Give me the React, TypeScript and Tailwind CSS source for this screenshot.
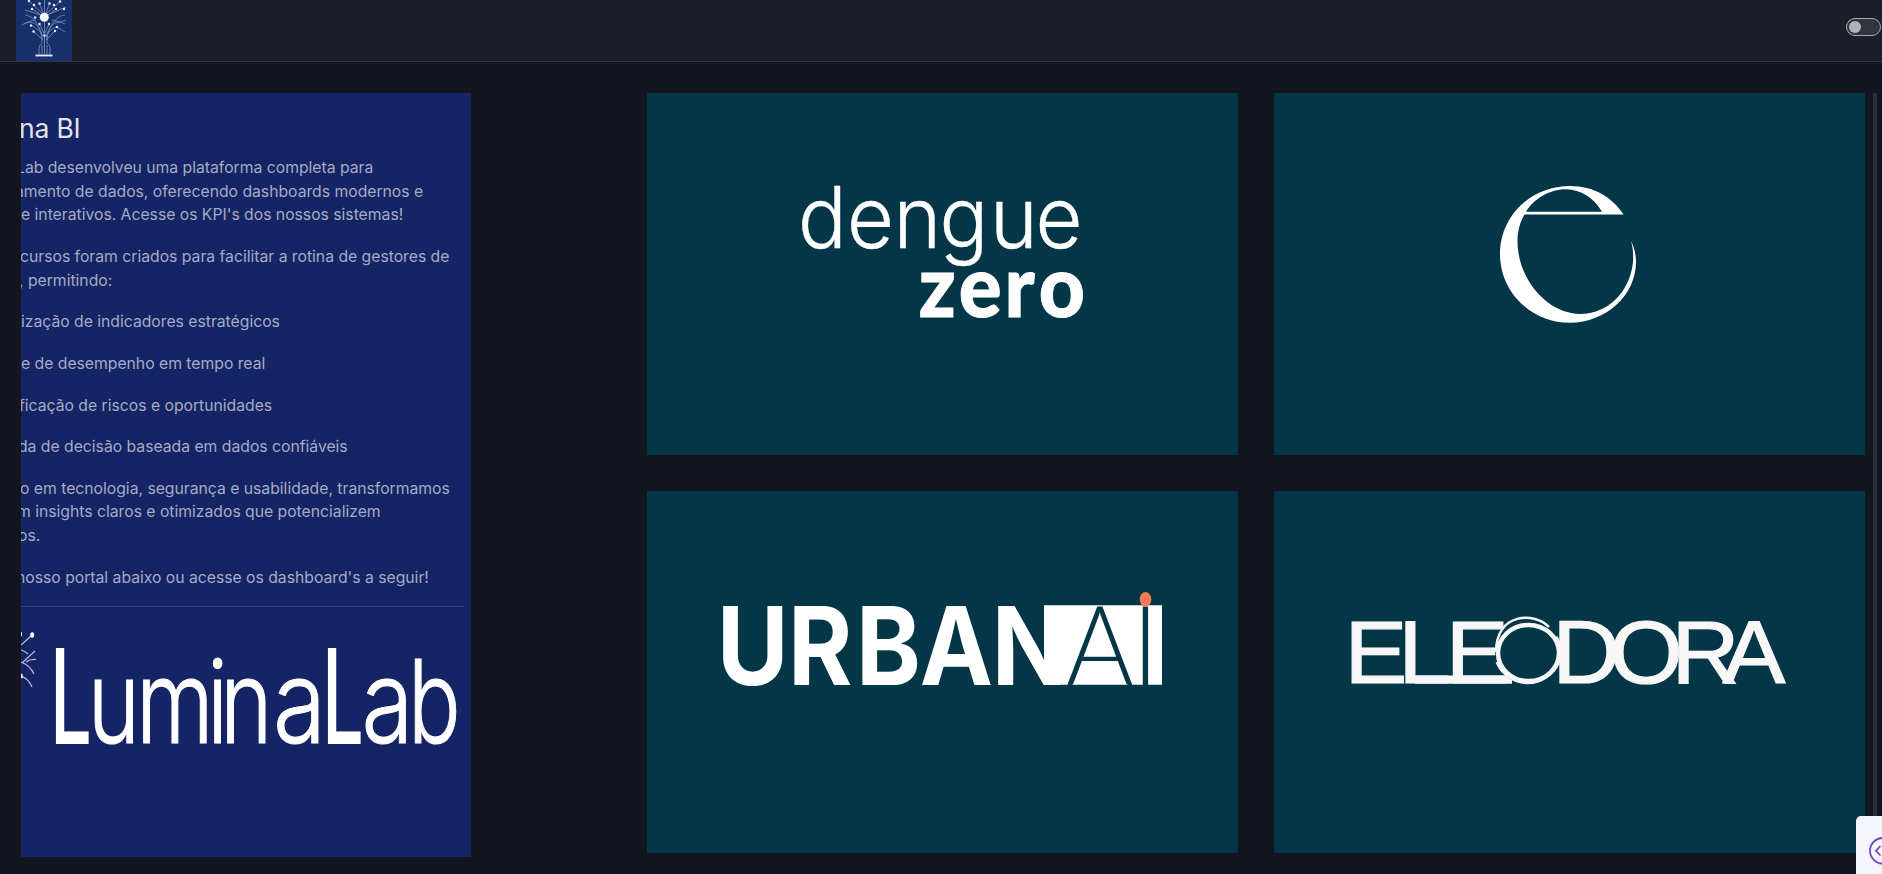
import type { ReactNode } from 'react';

const SEEDS: [number, number][] = [
  [29, 1], [34, 5], [32, 9], [39.5, 3.5], [60, 1.5], [56, 9], [64, 9], [54, 5], [49.5, 3.5],
  [35, 17.5], [31, 25.5], [39.5, 24], [33.5, 31.5], [49, 24], [57, 27], [55, 31], [44.5, 35.5],
];

function TreeLogo() {
  return (
    <svg className="h-[61px] w-14 bg-[#183069]" viewBox="16 0 56 61" aria-hidden="true">
      <g fill="none" stroke="#8fa3cf" strokeWidth="0.9" opacity="0.75">
        <path d="M44.5 0V46M44.5 17L32 9M44.5 17L56 9M43 14L29 1M46 14L60 1.5M44.5 17L39.5 3.5M44.5 17L49.5 3.5M44 16L25 10M45 16L66 7M44.5 34L49 24M44.5 34L39.5 24" />
        <path d="M42 40C41 26 34 19 24 24M47 40C48 26 55 19 65 24M42 34C38 24 32 15 25 15M47 34C51 24 58 15 65 15M43 37C40 30 36 28 31 25.5M46 37C49 30 53 28 57 27M43 40L33.5 31.5M46 40L55 31M52 20C58 22 62 22 66 20M36 20C31 21 26 22 22 25M57 27L65 32" />
        <path d="M42 34V43Q39 45 39 48V55M47 34V43Q50 45 50 48V55M44.5 36V55M42 45V55M47 45V55" />
      </g>
      <g fill="#dfe5f3">
        {SEEDS.map(([x, y]) => <circle key={`${x}-${y}`} cx={x} cy={y} r="1.25" />)}
      </g>
      <circle cx="44.3" cy="17.3" r="4.5" fill="#f4f6fa" />
      <path d="M35.5 55.5H52.5" stroke="#e6eaf3" strokeWidth="1.8" />
    </svg>
  );
}

function Line({ shift, children }: { shift: string; children: ReactNode }) {
  return <span className={`block whitespace-nowrap ${shift}`}>{children}</span>;
}

function AboutPanel() {
  return (
    <section className="h-[764px] w-[450px] shrink-0 overflow-hidden bg-[#152464] pt-[17px]">
      <h2 className="-ml-[2px] h-[37px] whitespace-nowrap text-[26.500px] leading-9 tracking-[-0.2px] text-[#e2e4ec]">na BI</h2>
      <div className="mt-[8.920px] space-y-[18px] text-[15.75px] leading-[23.650px] tracking-[-0.02px] text-[#a5abc4]">
        <p>
          <Line shift="-ml-[5px]">Lab desenvolveu uma plataforma completa para</Line>
          <Line shift="-ml-[6px]">amento de dados, oferecendo dashboards modernos e</Line>
          <Line shift="-ml-[5px]">te interativos. Acesse os KPI's dos nossos sistemas!</Line>
        </p>
        <p>
          <Line shift="-ml-[1px]">cursos foram criados para facilitar a rotina de gestores de</Line>
          <Line shift="-ml-[2px]">, permitindo:</Line>
        </p>
        <p><Line shift="ml-0">ização de indicadores estratégicos</Line></p>
        <p><Line shift="ml-0">e de desempenho em tempo real</Line></p>
        <p><Line shift="-ml-[2px]">ficação de riscos e oportunidades</Line></p>
        <p><Line shift="-ml-[3px]">da de decisão baseada em dados confiáveis</Line></p>
        <p>
          <Line shift="-ml-[1px]">o em tecnologia, segurança e usabilidade, transformamos</Line>
          <Line shift="-ml-[4px]">m insights claros e otimizados que potencializem</Line>
          <Line shift="-ml-[3px]">os.</Line>
        </p>
        <p><Line shift="-ml-[5px]">nosso portal abaixo ou acesse os dashboard's a seguir!</Line></p>
      </div>
      <hr className="mt-[17px] mr-[7px] border-[#34427a]" />
      <svg className="block h-[250px] w-[450px]" viewBox="21 608 450 250">
        <g fill="none" stroke="#b4bcd6" strokeWidth="1.2">
          <path d="M21 646L31 637M21 651Q25 652 28 655M22 664L35 652M26 663Q30 660 36 660.500M21 663Q30 666 34 675M21 677Q29 680 32 688" />
        </g>
        <ellipse cx="32.200" cy="636" rx="2" ry="2.800" fill="#fff" />
        <ellipse cx="21" cy="635" rx="1" ry="2.500" fill="#fff" />
        <ellipse cx="21" cy="677" rx="1.800" ry="2.500" fill="#fff" />
        <g fontFamily="Inter" fill="#fff">
          <text transform="translate(50 744.500) scale(.56 1)" fontWeight="500" fontSize="132">L</text>
          <text transform="translate(0 744) scale(.77 1)" x="114 177 269 286" fontWeight="300" fontSize="115" stroke="#fff" strokeWidth="1.200">umin</text>
          <text transform="translate(273 744) scale(.84 1)" fontWeight="300" fontSize="115" stroke="#fff" strokeWidth="1">a</text>
          <text transform="translate(322 744.500) scale(.56 1)" fontWeight="500" fontSize="132">L</text>
          <text transform="translate(361.500 744) scale(.82 1)" fontWeight="300" fontSize="115" stroke="#fff" strokeWidth="1">a</text>
          <text transform="translate(408 744) scale(.76 1)" fontWeight="300" fontSize="115" stroke="#fff" strokeWidth="1.200">b</text>
        </g>
      </svg>
    </section>
  );
}

function Card({ origin, label, children }: { origin: string; label: string; children: ReactNode }) {
  return (
    <a href="#" aria-label={label} className="block bg-[#033747]">
      <svg className="block h-full w-full" viewBox={`${origin} 591 362`}>{children}</svg>
    </a>
  );
}

function DengueZero() {
  return (
    <Card origin="647 93" label="dengue zero">
      <text transform="translate(0 248) scale(1 1.050)" x="798 847 893.500 939.500 990 1035.500" fontFamily="Inter" fontWeight="300" fontSize="81" fill="#fff" stroke="#fff" strokeWidth=".4">dengue</text>
      <text transform="scale(.93 1)" x="988 1031 1080 1117" y="316.700" fontFamily="Lato" fontWeight="900" fontSize="86" fill="#fff" stroke="#fff" strokeWidth="1">zero</text>
    </Card>
  );
}

function Monogram() {
  return (
    <Card origin="1274 93" label="Eleodora">
      <path
        fill="#fff"
        fillRule="evenodd"
        d="M1623.500 214.500C1612 197 1594 186 1570 186C1530 186 1500 217 1500 254C1500 292 1531 322.700 1570 322.700C1606 322.700 1636 295 1636 262C1636 254 1634 247 1631 241C1633 248 1633.500 255 1633 262C1630 292 1608 314 1580 314C1548 314 1517.500 280 1517.500 241C1517.500 231 1520 222 1524.500 214.500ZM1526 211.700C1534 199 1549 189.300 1566 189.300C1581 189.800 1593 197 1602 211.700Z"
      />
    </Card>
  );
}

function UrbanAI() {
  return (
    <Card origin="647 491" label="URBANAI">
      <path d="M1044 605.300H1162V684.700H1044Z" fill="#fff" />
      <text transform="scale(.9 1)" x="796.500 875.500 951 1022 1102" y="684.700" fontFamily="Inter" fontWeight="700" fontSize="109" fill="#fff">URBAN</text>
      <text transform="translate(1066 684.900) scale(.93 1)" x="0 71" fontFamily="Lato" fontWeight="300" fontSize="111" fill="#033747">AI</text>
      <ellipse cx="1145.500" cy="599.300" rx="5.800" ry="7.300" fill="#ff7857" />
    </Card>
  );
}

function Eleodora() {
  return (
    <Card origin="1274 491" label="ELEODORA">
      <path d="M1415 675.500H1512V683.700H1415Z" fill="#f7f7f8" />
      <text transform="scale(1.060 1)" y="683.500" x="1268.500 1319 1364 1464.500 1518.500 1577 1625" fontFamily="Liberation Sans" fontSize="89" fill="#f7f7f8" stroke="#f7f7f8" strokeWidth="1.200">ELEDORA</text>
      <ellipse cx="1528" cy="651.500" rx="32" ry="32" fill="#033747" stroke="#033747" strokeWidth="2" />
      <g fill="none" stroke="#f7f7f8">
        <ellipse cx="1528.500" cy="653" rx="30.500" ry="28" strokeWidth="4.500" />
        <path d="M1496 652C1496 612 1535 612 1549 627" strokeWidth="2.500" />
        <path d="M1497 662C1505 683 1535 692 1554 670C1562 660 1562 645 1556 637" strokeWidth="3" />
      </g>
    </Card>
  );
}

export default function App() {
  return (
    <div className="relative flex h-[874px] w-full flex-col overflow-hidden bg-[#14161f] font-[Inter,sans-serif]">
      <header className="flex h-[62px] shrink-0 items-center justify-between border-b border-[#33353f] bg-[#1c1e29] pl-4">
        <TreeLogo />
        <button aria-label="Tema" className="mt-[-7px] mr-px flex h-[18px] w-[35px] items-center rounded-full border border-[#a9abb0] bg-[#32343f] pl-[2px]">
          <span className="size-3 rounded-full bg-[#b0b2b7]" />
        </button>
      </header>
      <main className="flex pt-[31px] pl-[21px]">
        <AboutPanel />
        <div className="ml-[176px] grid h-[760px] w-[1218px] grid-cols-2 grid-rows-2 gap-9">
          <DengueZero />
          <Monogram />
          <UrbanAI />
          <Eleodora />
        </div>
        <div className="ml-2 h-[781px] w-1 bg-[#2b2c36]" />
      </main>
      <div className="absolute top-[816px] left-[1856px] h-[58px] w-[26px] overflow-hidden rounded-tl-[5px] bg-[#f5f6fb]">
        <svg className="h-[58px] w-[26px]" viewBox="0 0 26 58" fill="none" stroke="#7847bd" strokeWidth="1.800">
          <circle cx="26.800" cy="34.800" r="12.800" />
          <path d="M24.500 30L20 34.800L24.500 39.500" />
        </svg>
      </div>
    </div>
  );
}
